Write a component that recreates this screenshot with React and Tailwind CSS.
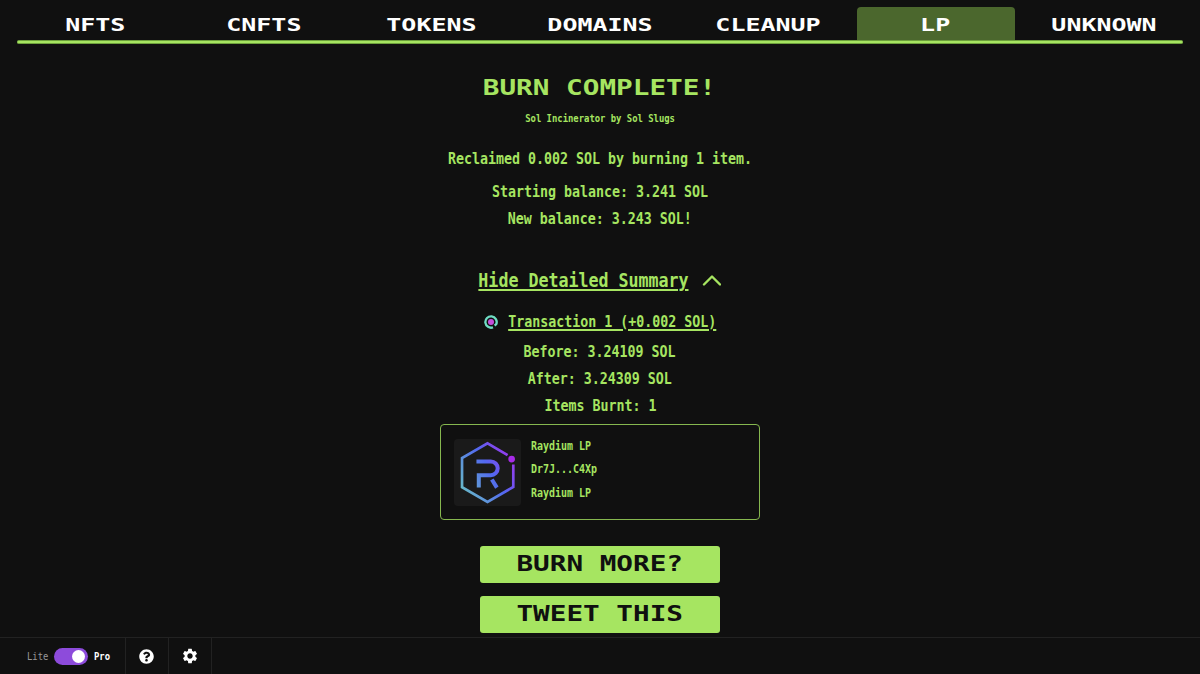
import { FaQuestionCircle } from 'react-icons/fa'
import { MdSettings } from 'react-icons/md'

const tabs = ['NFTS', 'CNFTS', 'TOKENS', 'DOMAINS', 'CLEANUP', 'LP', 'UNKNOWN']

function Wide ({ children }) {
  return <span className="inline-block whitespace-pre scale-x-[1.35] font-bold">{children}</span>
}

function Narrow ({ children, className = 'font-bold' }) {
  return <span className={`inline-block whitespace-pre scale-x-[0.831] ${className}`}>{children}</span>
}

function TransactionIcon () {
  return (
    <svg className="w-[14px] h-[14px] mt-px" viewBox="0 0 42 42" fill="none">
      <path d="M27 37 A17 17 0 1 1 37 27 L32 32" stroke="#6fdcc4" strokeWidth="7" strokeLinejoin="round" />
      <circle cx="21" cy="21" r="9" fill="#c44fdc" />
    </svg>
  )
}

function RaydiumLogo () {
  return (
    <svg className="w-[67px] h-[67px] rounded bg-[#1a1a1a]" viewBox="0 0 200 200" fill="none">
      <defs>
        <linearGradient id="ray" gradientUnits="userSpaceOnUse" x1="178" y1="50" x2="20" y2="145">
          <stop offset="0" stopColor="#a035ee" />
          <stop offset="0.45" stopColor="#5268f0" />
          <stop offset="1" stopColor="#68b8c8" />
        </linearGradient>
      </defs>
      <g stroke="url(#ray)">
        <path d="M177 76 V143 L100 188 L24 144 V57 L100 13 L160 48" strokeWidth="8" />
        <path d="M67 67 H110 A20 20 0 0 1 110 108 H74 V145" strokeWidth="12" />
        <path d="M113 121 L128 145" strokeWidth="12" />
      </g>
      <circle cx="172" cy="60" r="10" fill="#a82be8" />
    </svg>
  )
}

export default function App () {
  return (
    <div className="flex flex-col h-[674px] overflow-hidden bg-[#101010] text-[#a6e561] font-['DejaVu_Sans_Mono',monospace]">
      <nav className="mx-[17px] mt-[7px] h-[37px] shrink-0">
        <div className="grid grid-cols-7 gap-[10px] h-[33px] text-white text-[18.5px]">
          {tabs.map(t => (
            <button key={t} className={`h-[33px] pt-px pr-px rounded-t leading-[33px] ${t === 'LP' ? 'bg-[#4b672d]' : ''}`}>
              <Wide>{t}</Wide>
            </button>
          ))}
        </div>
        <div className="h-[4px] rounded-full bg-[#a6e561] border-y border-[#6da03c]" />
      </nav>

      <main className="flex flex-col items-center grow text-base leading-[27px]">
        <h1 className="mt-[28px] pr-px text-[20.5px] leading-[32px]"><Wide>BURN COMPLETE!</Wide></h1>
        <p className="mt-[7px] text-[10.7px] leading-4"><Narrow>Sol Incinerator by Sol Slugs</Narrow></p>
        <p className="mt-[18px]"><Narrow>Reclaimed 0.002 SOL by burning 1 item.</Narrow></p>
        <p className="mt-[6px]"><Narrow>Starting balance: 3.241 SOL</Narrow></p>
        <p><Narrow>New balance: 3.243 SOL!</Narrow></p>

        <button className="mt-[32px] flex items-center justify-between w-[243px] h-8 text-xl">
          <span className="w-[210px] flex justify-center">
            <Narrow className="font-bold underline underline-offset-2 decoration-2">Hide Detailed Summary</Narrow>
          </span>
          <svg className="w-5 h-3 mr-px" viewBox="0 0 20 12" fill="none" stroke="currentColor" strokeWidth="2.4" strokeLinecap="round" strokeLinejoin="round">
            <path d="M3 10.5 L11 2.5 L19 10.5" />
          </svg>
        </button>

        <div className="mt-[11px] flex items-center justify-between w-[232px] h-[28px]">
          <TransactionIcon />
          <a className="w-[208px] flex justify-center">
            <Narrow className="font-bold underline underline-offset-2 decoration-[1.5px]">Transaction 1 (+0.002 SOL)</Narrow>
          </a>
        </div>
        <p className="mt-[3px]"><Narrow>Before: 3.24109 SOL</Narrow></p>
        <p><Narrow>After: 3.24309 SOL</Narrow></p>
        <p><Narrow>Items Burnt: 1</Narrow></p>

        <div className="mt-[5px] flex w-[320px] h-[96px] rounded border border-[#86b74f] pl-[13px] pt-[14px]">
          <RaydiumLogo />
          <div className="ml-[9.5px] -mt-[4px] flex flex-col items-start text-xs leading-[23.3px]">
            <Narrow className="font-bold origin-left">Raydium LP</Narrow>
            <Narrow className="font-bold origin-left">Dr7J...C4Xp</Narrow>
            <Narrow className="font-bold origin-left">Raydium LP</Narrow>
          </div>
        </div>

        <button className="mt-[26px] w-[240px] h-[37px] pr-px pb-px rounded-[3px] bg-[#a6e561] text-[#101010] text-[20.5px] leading-[36px]"><Wide>BURN MORE?</Wide></button>
        <button className="mt-[13px] w-[240px] h-[37px] pb-px rounded-[3px] bg-[#a6e561] text-[#101010] text-[20.5px] leading-[36px]"><Wide>TWEET THIS</Wide></button>
      </main>

      <footer className="flex h-[37px] shrink-0 border-t border-[#222] text-white text-[10.7px]">
        <div className="flex items-center pl-[27px] w-[126px] border-r border-[#222]">
          <span className="w-[27px] pt-[2px] text-[#999]"><Narrow className="origin-left">Lite</Narrow></span>
          <div className="flex justify-end items-center w-[34px] h-[17px] px-[3px] rounded-full bg-[#8d4bdb]">
            <div className="w-[13px] h-[13px] rounded-full bg-white" />
          </div>
          <span className="ml-[6px] pt-[2px]"><Narrow className="font-bold origin-left">Pro</Narrow></span>
        </div>
        <div className="flex items-center justify-center w-[43px] pr-px border-r border-[#222]"><FaQuestionCircle size={15} /></div>
        <div className="flex items-center justify-center w-[43px] pr-px border-r border-[#222]"><MdSettings size={18} /></div>
      </footer>
    </div>
  )
}
